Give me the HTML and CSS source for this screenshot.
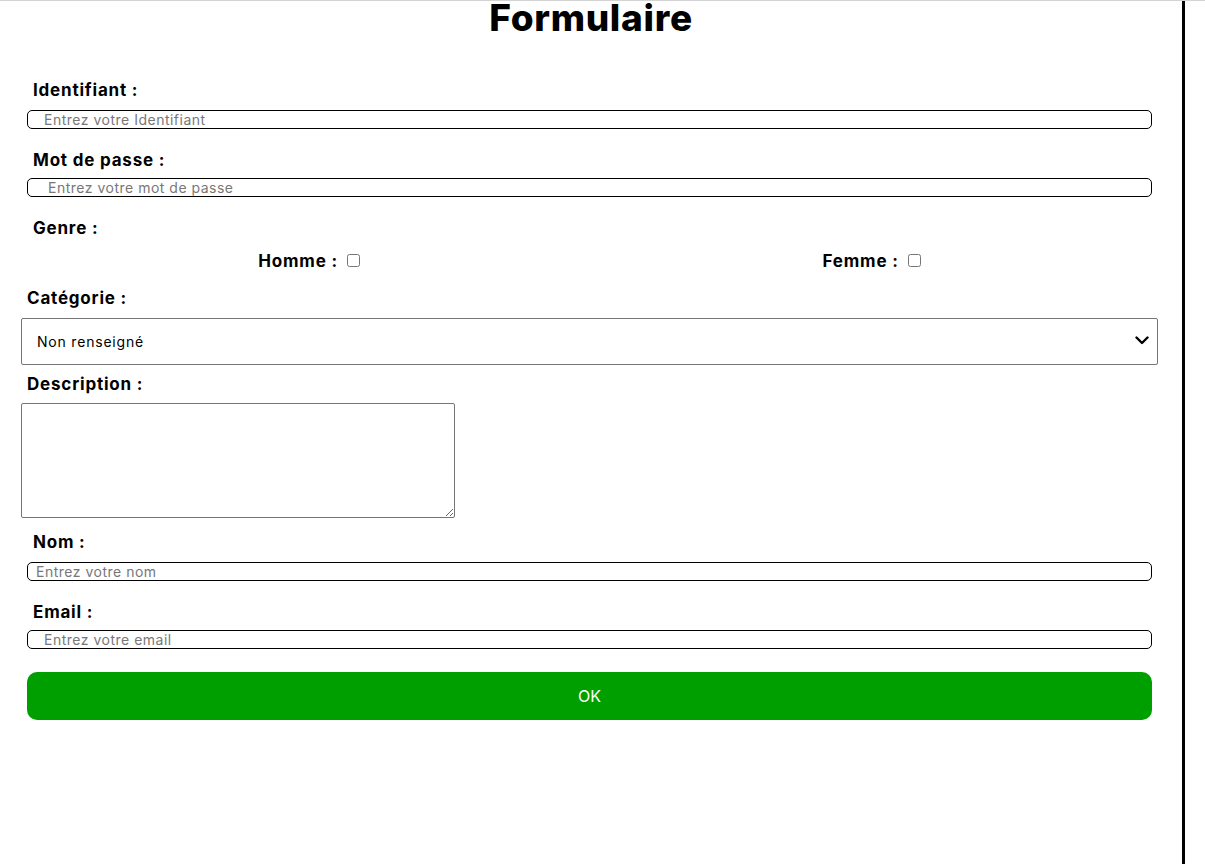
FILE: index.html
```html
<!DOCTYPE html>
<html lang="fr">
<head>
<meta charset="utf-8">
<title>Formulaire</title>
<link rel="stylesheet" href="styles.css">
</head>
<body>
<div class="page">
  <h1 class="title">Formulaire</h1>
  <form class="form">
    <label class="lbl lbl-first" for="ident">Identifiant :</label>
    <input class="field pad-16" id="ident" type="text" placeholder="Entrez votre Identifiant">

    <label class="lbl" for="mdp">Mot de passe :</label>
    <input class="field pad-20" id="mdp" type="password" placeholder="Entrez votre mot de passe">

    <span class="lbl">Genre :</span>
    <div class="genre">
      <label class="choice">Homme : <input type="checkbox"></label>
      <label class="choice">Femme : <input type="checkbox"></label>
    </div>

    <label class="lbl lbl-flush lbl-cat" for="cat">Catégorie :</label>
    <div class="select-wrap">
      <select class="select" id="cat">
        <option>Non renseigné</option>
      </select>
      <svg class="chevron" width="14" height="9" viewBox="0 0 14 9" aria-hidden="true">
        <path d="M1.5 1.5 L7 7 L12.5 1.5" fill="none" stroke="#000" stroke-width="2.4" stroke-linecap="round" stroke-linejoin="round"/>
      </svg>
    </div>

    <label class="lbl lbl-flush lbl-desc" for="desc">Description :</label>
    <textarea class="area" id="desc"></textarea>

    <label class="lbl lbl-nom" for="nom">Nom :</label>
    <input class="field pad-8" id="nom" type="text" placeholder="Entrez votre nom">

    <label class="lbl" for="mail">Email :</label>
    <input class="field pad-16" id="mail" type="email" placeholder="Entrez votre email">

    <button class="ok" type="button">OK</button>
  </form>
</div>
</body>
</html>
```

FILE: styles.css
```css
html, body {
  margin: 0;
  padding: 0;
  background: #fff;
}
body {
  border-top: 1px solid #d3d3d3;
  font-family: Inter, "Open Sans", sans-serif;
  color: #000;
}
.page {
  display: flow-root;
  width: 1182px;
  min-height: 863px;
  border-right: 3px solid #000;
  box-sizing: content-box;
}
.title {
  margin: -3px 0 0;
  text-align: center;
  font-size: 37px;
  line-height: 40px;
  font-weight: 800;
  letter-spacing: 0.7px;
}
.form {
  display: flex;
  flex-direction: column;
  padding: 0 30px 0 27px;
}
.lbl {
  display: block;
  font-size: 17px;
  font-weight: 700;
  line-height: 24px;
  letter-spacing: 0.8px;
  padding-left: 6px;
  margin-top: 19px;
  margin-bottom: 6px;
}
.lbl-first { margin-top: 40px; margin-bottom: 8px; }
.lbl-flush { padding-left: 0; }
.lbl-cat { margin-top: 13px; margin-bottom: 8px; }
.lbl-desc { margin-top: 7px; margin-bottom: 7px; }
.lbl-nom { margin-top: 12px; margin-bottom: 8px; }
.field {
  box-sizing: border-box;
  height: 19px;
  width: 100%;
  border: 1px solid #000;
  border-radius: 5px;
  font-family: inherit;
  font-size: 14px;
  letter-spacing: 0.5px;
  padding: 0;
  margin: 0;
  outline: none;
}
.field::placeholder { color: #777; }
.pad-16 { padding-left: 16px; }
.pad-20 { padding-left: 20px; }
.pad-8 { padding-left: 8px; }
.genre {
  display: flex;
  justify-content: space-around;
  margin-top: 3px;
}
.choice {
  font-size: 17px;
  font-weight: 700;
  line-height: 24px;
  letter-spacing: 0.8px;
  display: flex;
  align-items: center;
}
.choice input {
  margin: 0 0 2px 9px;
  width: 13px;
  height: 13px;
}
.select-wrap {
  position: relative;
  display: flex;
  margin: 0 -6px;
}
.select {
  flex: 1;
  box-sizing: border-box;
  height: 47px;
  padding: 0 10px 0 15px;
  font-family: inherit;
  font-size: 14px;
  letter-spacing: 0.8px;
  color: #000;
  background: #fff;
  border: 1px solid #767676;
  border-radius: 2px;
  appearance: none;
  -webkit-appearance: none;
}
.chevron {
  position: absolute;
  right: 9px;
  top: 18px;
  pointer-events: none;
}
.area {
  box-sizing: border-box;
  margin: 0 0 0 -6px;
  width: 434px;
  height: 115px;
  border: 1px solid #767676;
  border-radius: 2px;
}
.ok {
  margin-top: 23px;
  height: 48px;
  border: none;
  border-radius: 10px;
  background: #009f00;
  color: #fff;
  font-family: inherit;
  font-size: 16px;
}
```
